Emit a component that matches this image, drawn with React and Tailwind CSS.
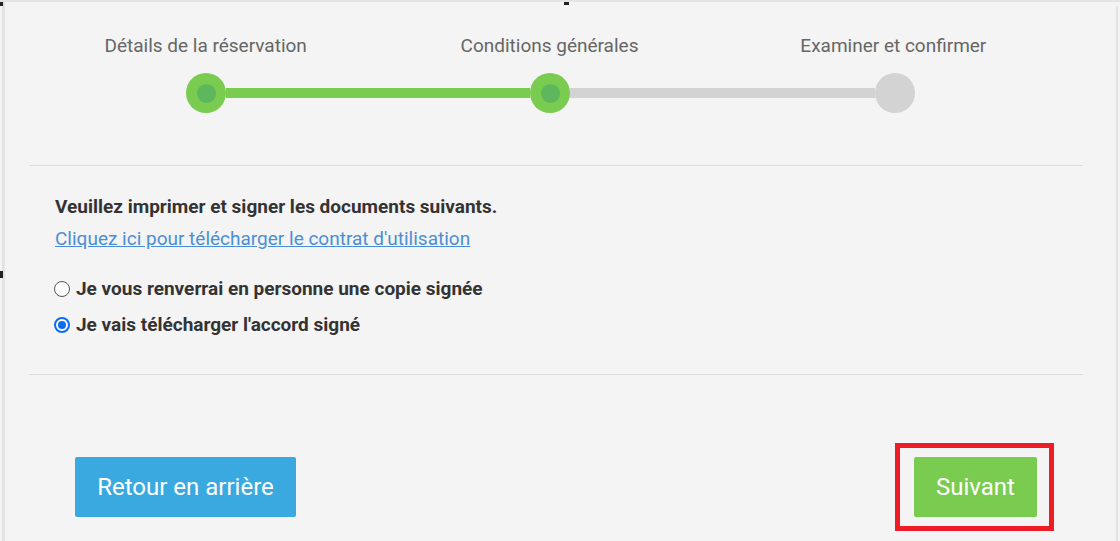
export default function App() {
  return (
    <div className="relative w-[1120px] h-[541px] overflow-hidden bg-[#f4f4f4] border-t-2 border-[#e4e4e4] font-['Roboto',sans-serif]">
      <div className="absolute left-0 top-0 w-[3px] h-[4px] bg-[#222]" />
      <div className="absolute left-[564px] top-0 w-[5px] h-[3px] bg-[#222]" />
      <div className="absolute left-0 top-[269px] w-[3px] h-[7px] bg-[#222]" />
      <div className="flex h-full">
        <div className="w-[3px] ml-[2px] bg-[#e3e3e3] h-full" />
        <div className="flex-1 flex flex-col">
          <div className="flex ml-[29px] w-[1031px] pt-[33px]">
            <div className="w-[344px] text-center text-[19px] text-[#666] leading-[22px]">Détails de la réservation</div>
            <div className="w-[345px] text-center text-[19px] text-[#666] leading-[22px]">Conditions générales</div>
            <div className="w-[344px] text-center text-[19px] text-[#666] leading-[22px]">Examiner et confirmer</div>
          </div>
          <div className="flex items-center pl-[181px] mt-[16px]">
            <div className="w-[40px] h-[40px] rounded-full bg-[#79cc4f] flex items-center justify-center">
              <div className="w-[19px] h-[19px] rounded-full bg-[#5db85d]" />
            </div>
            <div className="w-[304px] h-[10px] bg-[#79cc4f]" />
            <div className="w-[40px] h-[40px] rounded-full bg-[#79cc4f] flex items-center justify-center">
              <div className="w-[19px] h-[19px] rounded-full bg-[#5db85d]" />
            </div>
            <div className="w-[305px] h-[10px] bg-[#d3d3d3]" />
            <div className="w-[40px] h-[40px] rounded-full bg-[#d3d3d3]" />
          </div>
          <div className="ml-[24px] w-[1054px] h-px bg-[#dddddd] mt-[52px]" />
          <div className="pl-[50px] pt-[29px]">
            <p className="text-[19px] font-bold text-[#333] leading-[24px]">Veuillez imprimer et signer les documents suivants.</p>
            <a href="#" className="block mt-[8px] text-[19px] text-[#4a8fd6] underline leading-[24px]">Cliquez ici pour télécharger le contrat d'utilisation</a>
            <label className="flex items-center mt-[26px] h-[24px]">
              <span className="w-[16px] h-[16px] rounded-full border-[1.5px] border-[#555] bg-white ml-[-1px]" />
              <span className="ml-[6px] text-[19px] font-bold text-[#333]">Je vous renverrai en personne une copie signée</span>
            </label>
            <label className="flex items-center mt-[12px] h-[24px]">
              <span className="w-[16px] h-[16px] rounded-full border-[2px] border-[#0b6cf5] bg-white ml-[-1px] flex items-center justify-center">
                <span className="w-[8px] h-[8px] rounded-full bg-[#0b6cf5]" />
              </span>
              <span className="ml-[6px] text-[19px] font-bold text-[#333]">Je vais télécharger l'accord signé</span>
            </label>
          </div>
          <div className="ml-[24px] w-[1054px] h-px bg-[#dddddd] mt-[37px]" />
          <div className="flex items-center justify-between ml-[70px] w-[962px] mt-[82px]">
            <button className="w-[221px] h-[60px] rounded-[2px] bg-[#3aa9e0] text-white text-[24px]">Retour en arrière</button>
            <div className="relative">
              <div className="absolute left-[-19px] top-[-14px] w-[159px] h-[88px] border-[5px] border-[#ee1c25]" />
              <button className="relative w-[123px] h-[60px] rounded-[2px] bg-[#7acc50] text-white text-[24px]">Suivant</button>
            </div>
          </div>
        </div>
        <div className="w-[2px] mr-[2px] bg-[#e3e3e3] h-full mt-[4px] rounded-t" />
      </div>
    </div>
  );
}
